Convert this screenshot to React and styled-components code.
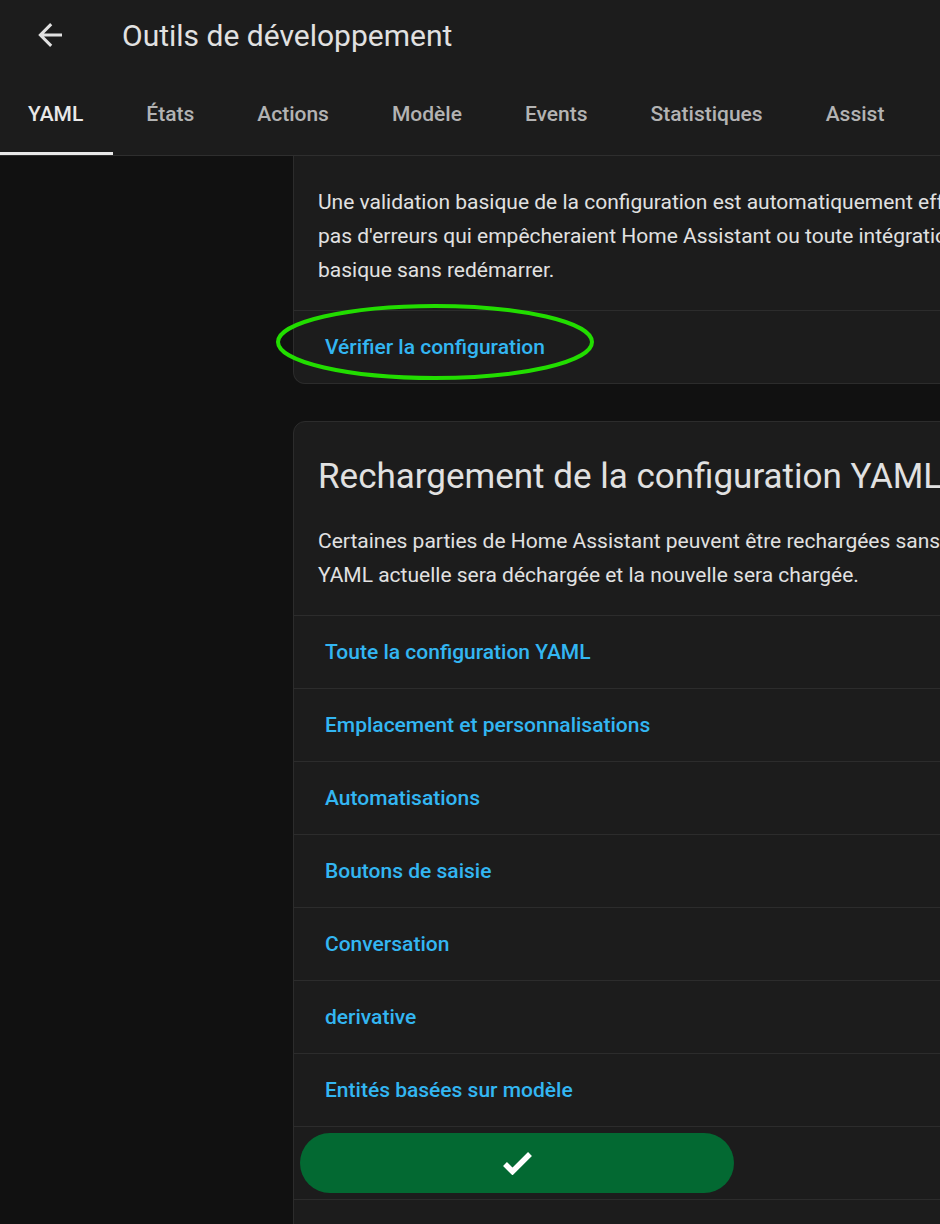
import React from "react"
import styled, { createGlobalStyle } from "styled-components"

const GlobalStyle = createGlobalStyle`
  html, body {
    margin: 0;
    padding: 0;
    background: #111111;
    overflow: hidden;
    font-family: Roboto, "Noto Sans", "Liberation Sans", sans-serif;
    -webkit-font-smoothing: antialiased;
  }
`

const Page = styled.div`
  width: 940px;
  height: 1224px;
  background: #111111;
  overflow: hidden;
`

const Header = styled.header`
  background: #1c1c1c;
  border-bottom: 1px solid #2e2e2e;
`

const TopBar = styled.div`
  height: 75px;
  display: flex;
  align-items: center;
  padding-left: 32px;
  box-sizing: border-box;
`

const BackButton = styled.button`
  width: 36px;
  height: 36px;
  padding: 0;
  border: none;
  background: none;
  color: #e1e1e1;
  display: flex;
  align-items: center;
  justify-content: center;
  margin-top: -6px;
`

const Title = styled.h1`
  margin: -5px 0 0 54px;
  font-size: 30px;
  font-weight: 400;
  color: #e1e1e1;
`

const Tabs = styled.nav`
  display: flex;
  gap: 3px;
  margin-left: -2px;
  height: 80px;
`

const Tab = styled.div`
  position: relative;
  display: flex;
  align-items: center;
  padding: 0 30px 2px;
  font-size: 21px;
  font-weight: 500;
  color: ${(p) => (p.$active ? "#e8e8e8" : "#b3b3b3")};

  &::after {
    content: "";
    display: ${(p) => (p.$active ? "block" : "none")};
    position: absolute;
    left: 0;
    right: 0;
    bottom: 0;
    height: 3px;
    background: #e8e8e8;
  }
`

const Content = styled.main`
  padding-left: 293px;
`

const Card = styled.section`
  width: 800px;
  background: #1c1c1c;
  border: 1px solid #2c2c2c;
  border-radius: 12px;
  margin-bottom: 37px;
  box-sizing: border-box;
  ${(p) =>
    p.$cut &&
    `
    border-top: none;
    border-top-left-radius: 0;
    border-top-right-radius: 0;
  `}
`

const CardTitle = styled.h2`
  margin: 0;
  padding: 31px 24px 0;
  font-size: 35px;
  font-weight: 400;
  line-height: 48px;
  color: #e1e1e1;
  white-space: nowrap;
`

const CardText = styled.p`
  margin: 0;
  padding: ${(p) => (p.$top ? `${p.$top}px` : "23px")} 24px 23px;
  font-size: 21px;
  line-height: 34px;
  color: #e1e1e1;
  white-space: nowrap;
`

const Row = styled.div`
  position: relative;
  height: 72px;
  display: flex;
  align-items: center;
  padding: 0 6px;
  border-top: 1px solid #2c2c2c;
`

const LinkButton = styled.button`
  height: 60px;
  padding: 0 25px;
  border: none;
  background: none;
  font-family: inherit;
  font-size: 21px;
  font-weight: 500;
  color: #33b6f2;
  cursor: pointer;
`

const SuccessButton = styled.button`
  width: 434px;
  height: 60px;
  border: none;
  border-radius: 30px;
  background: #036932;
  color: #ffffff;
  display: flex;
  align-items: center;
  justify-content: center;
`

const Highlight = styled.svg`
  position: absolute;
  left: -21px;
  top: -10px;
  width: 324px;
  height: 82px;
  pointer-events: none;
  overflow: visible;
`

const tabs = ["YAML", "États", "Actions", "Modèle", "Events", "Statistiques", "Assist"]

const reloads = [
  "Toute la configuration YAML",
  "Emplacement et personnalisations",
  "Automatisations",
  "Boutons de saisie",
  "Conversation",
  "derivative",
  "Entités basées sur modèle",
]

export default function App() {
  return (
    <Page>
      <GlobalStyle />
      <Header>
        <TopBar>
          <BackButton aria-label="Retour">
            <svg width="36" height="36" viewBox="0 0 24 24">
              <path
                fill="currentColor"
                d="M20,11V13H8L13.5,18.5L12.08,19.92L4.16,12L12.08,4.08L13.5,5.5L8,11H20Z"
              />
            </svg>
          </BackButton>
          <Title>Outils de développement</Title>
        </TopBar>
        <Tabs>
          {tabs.map((t, i) => (
            <Tab key={t} $active={i === 0}>
              {t}
            </Tab>
          ))}
        </Tabs>
      </Header>

      <Content>
        <Card $cut>
          <CardText $top={29}>
            Une validation basique de la configuration est automatiquement effectuée lors de
            <br />
            pas d'erreurs qui empêcheraient Home Assistant ou toute intégration de démarrer
            <br />
            basique sans redémarrer.
          </CardText>
          <Row>
            <LinkButton>Vérifier la configuration</LinkButton>
            <Highlight viewBox="0 0 324 82">
              <ellipse
                cx="162"
                cy="41"
                rx="157"
                ry="36"
                fill="none"
                stroke="#22dd00"
                strokeWidth="4"
              />
            </Highlight>
          </Row>
        </Card>

        <Card>
          <CardTitle>Rechargement de la configuration YAML</CardTitle>
          <CardText>
            Certaines parties de Home Assistant peuvent être rechargées sans nécessiter de
            <br />
            YAML actuelle sera déchargée et la nouvelle sera chargée.
          </CardText>
          {reloads.map((r) => (
            <Row key={r}>
              <LinkButton>{r}</LinkButton>
            </Row>
          ))}
          <Row>
            <SuccessButton aria-label="Rechargé">
              <svg width="30" height="24" viewBox="0 0 30 24">
                <path
                  d="M3,13 L10.5,20.5 L28,3"
                  fill="none"
                  stroke="currentColor"
                  strokeWidth="5.5"
                  strokeLinejoin="miter"
                />
              </svg>
            </SuccessButton>
          </Row>
          <Row />
        </Card>
      </Content>
    </Page>
  )
}
